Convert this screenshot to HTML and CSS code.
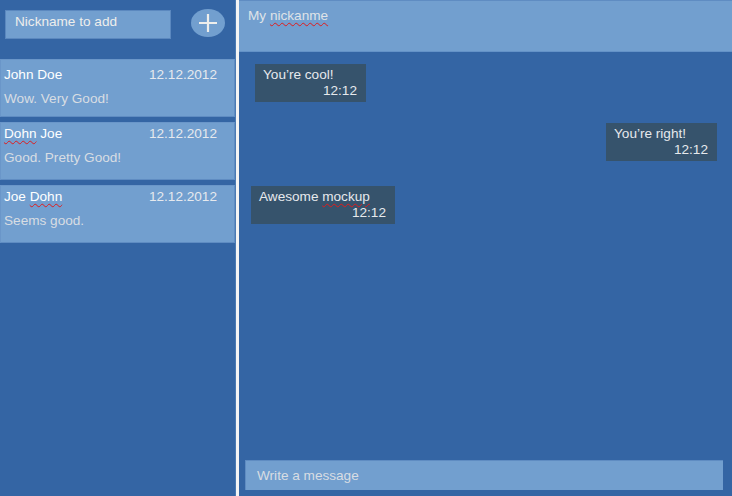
FILE: index.html
```html
<!DOCTYPE html>
<html>
<head>
<meta charset="utf-8">
<link rel="stylesheet" href="styles.css">
</head>
<body>
<div class="app">
  <aside class="sidebar">
    <div class="add-row">
      <div class="nick-input">Nickname to add</div>
      <div class="add-btn">
        <svg width="20" height="20" viewBox="0 0 20 20"><path d="M10 1v18M1 10h18" stroke="#eeeeec" stroke-width="2.2" fill="none"/></svg>
      </div>
    </div>
    <div class="contacts">
      <div class="card first">
        <div class="card-top"><span class="name">John Doe</span><span class="date">12.12.2012</span></div>
        <div class="msg">Wow. Very Good!</div>
      </div>
      <div class="card">
        <div class="card-top"><span class="name"><span class="typo">Dohn</span> Joe</span><span class="date">12.12.2012</span></div>
        <div class="msg">Good. Pretty Good!</div>
      </div>
      <div class="card">
        <div class="card-top"><span class="name">Joe <span class="typo">Dohn</span></span><span class="date">12.12.2012</span></div>
        <div class="msg">Seems good.</div>
      </div>
    </div>
  </aside>
  <div class="divider"></div>
  <main class="chat">
    <header class="chat-head">My <span class="typo">nickanme</span></header>
    <div class="messages">
      <div class="bubble b1"><div>You’re cool!</div><div class="time">12:12</div></div>
      <div class="bubble b2"><div>You’re right!</div><div class="time">12:12</div></div>
      <div class="bubble b3"><div>Awesome <span class="typo">mockup</span></div><div class="time">12:12</div></div>
    </div>
    <div class="composer">Write a message</div>
  </main>
</div>
</body>
</html>
```
FILE: styles.css
```css
html, body {
  margin: 0;
  padding: 0;
}
body {
  width: 732px;
  height: 496px;
  background: #3465a4;
  font-family: "Liberation Sans", Arial, sans-serif;
  font-size: 13.6px;
  color: #eeeeec;
  overflow: hidden;
}
.app {
  display: flex;
  height: 496px;
}
.sidebar {
  width: 235px;
  border-right: 1px solid #4a7ab3;
  display: flex;
  flex-direction: column;
}
.add-row {
  display: flex;
  align-items: flex-start;
  height: 59px;
  box-sizing: border-box;
  padding: 9px 0 0 5px;
}
.nick-input {
  width: 166px;
  height: 29px;
  margin-top: 1px;
  box-sizing: border-box;
  background: #729fcf;
  border: 1px solid #5b88bf;
  padding: 2px 0 0 9px;
  line-height: 18px;
  color: #eeeeec;
}
.add-btn {
  width: 34px;
  height: 28px;
  margin-left: 20px;
  border-radius: 50%;
  background: #729fcf;
  display: flex;
  align-items: center;
  justify-content: center;
}
.contacts {
  display: flex;
  flex-direction: column;
  gap: 5px;
}
.card {
  height: 58px;
  box-sizing: border-box;
  background: #729fcf;
  border: 1px solid #6a96c9;
  border-bottom-color: #5f8cc2;
  border-right-color: #5f8cc2;
  padding: 2px 17px 0 3px;
}
.card.first {
  padding-top: 6px;
}
.card-top {
  display: flex;
  justify-content: space-between;
  line-height: 18px;
}
.name {
  color: #ffffff;
}
.date {
  color: #e6e9ee;
}
.msg {
  margin-top: 6px;
  line-height: 18px;
  color: #d8dde3;
}
.divider {
  width: 3px;
  background: #f4f4f4;
}
.chat {
  flex: 1;
  display: flex;
  flex-direction: column;
}
.chat-head {
  height: 52px;
  box-sizing: border-box;
  background: #729fcf;
  border-top: 1px solid #5f8cc2;
  border-bottom: 1px solid #6492c7;
  padding: 6px 0 0 9px;
  line-height: 18px;
  color: #dfe3e8;
}
.messages {
  flex: 1;
  display: flex;
  flex-direction: column;
  align-items: flex-start;
}
.bubble {
  background: #36536c;
  box-sizing: border-box;
  width: 111px;
  height: 38px;
  padding: 3px 9px 0 8px;
  line-height: 16px;
  color: #e6e9ec;
}
.time {
  text-align: right;
}
.b1 {
  margin: 12px 0 0 16px;
}
.b2 {
  margin: 21px 0 0 367px;
}
.b3 {
  margin: 25px 0 0 12px;
  width: 144px;
}
.composer {
  height: 30px;
  box-sizing: border-box;
  margin: 0 9px 6px 6px;
  background: #729fcf;
  border-top: 1px solid #5f8cc2;
  border-left: 1px solid #5f8cc2;
  padding: 6px 0 0 11px;
  line-height: 18px;
  color: #d8dde3;
}
.typo {
  text-decoration: underline wavy #e01b1b;
  text-decoration-thickness: 1px;
  text-underline-offset: 2px;
}
```
